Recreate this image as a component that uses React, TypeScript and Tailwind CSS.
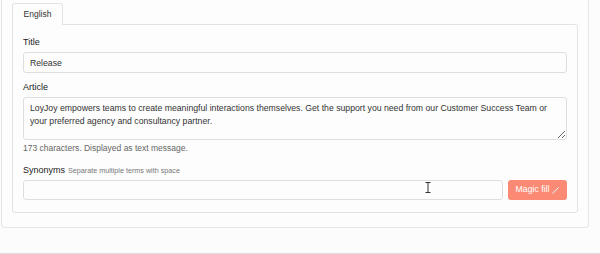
export default function App() {
  return (
    <div
      className="w-[600px] h-[254px] bg-[#fcfcfc] flex flex-col overflow-hidden text-[#333]"
      style={{ fontFamily: "'Liberation Sans', Arial, sans-serif" }}
    >
      <div className="ml-px w-[588px] h-[228px] border border-t-0 border-[#e6e6e6] rounded-b-[4px] bg-[#fdfdfd] pt-[3px] pl-[10px] flex flex-col">
        {/* tab */}
        <div className="w-[51px] h-[22px] -mb-px relative z-10 border border-b-0 border-[#e2e2e2] rounded-t-[3px] bg-[#fdfdfd] flex items-center justify-center text-[8.5px] text-[#333]">
          English
        </div>

        {/* panel */}
        <div className="w-[566px] h-[189px] border border-[#e2e2e2] rounded-b-[3px] rounded-tr-[3px] pt-[10px] px-[10px] flex flex-col">
          <label className="text-[9px] leading-[14px] text-[#222] mb-[3px]">Title</label>
          <input
            defaultValue="Release"
            className="w-[544px] h-[21px] border border-[#dedede] rounded-[3px] bg-[#fdfdfd] px-[6px] text-[8.7px] text-[#333] outline-none"
          />

          <label className="mt-[7px] text-[9px] leading-[14px] text-[#222] mb-[3px]">Article</label>
          <textarea
            defaultValue="LoyJoy empowers teams to create meaningful interactions themselves. Get the support you need from our Customer Success Team or your preferred agency and consultancy partner."
            className="w-[544px] h-[43px] border border-[#dedede] rounded-[3px] bg-[#fdfdfd] px-[6px] pt-[4px] text-[8.7px] leading-[13px] text-[#333] outline-none resize-y"
          />
          <div className="mt-[1px] text-[8.5px] leading-[14px] text-[#666]">
            173 characters. Displayed as text message.
          </div>

          <div className="mt-[8px] mb-[3px] h-[14px] flex items-baseline gap-[3px] leading-[14px]">
            <span className="text-[9px] leading-[14px] text-[#222]">Synonyms</span>
            <span className="text-[7.2px] leading-[14px] text-[#777]">Separate multiple terms with space</span>
          </div>
          <div className="flex gap-[5px] relative">
            <input className="w-[480px] h-[20px] border border-[#dedede] rounded-[3px] bg-[#fdfdfd] outline-none" />
            <button className="w-[59px] h-[20px] rounded-[3px] bg-[#fb8a74] text-white text-[8.7px] flex items-center justify-center gap-[3px]">
              Magic fill
              <svg width="7" height="7" viewBox="0 0 7 7">
                <path d="M0.8 6.2L5.2 1.8" stroke="#e4d6d2" strokeWidth="1.2" strokeLinecap="round" />
                <path d="M5.4 1.6L6.3 0.7" stroke="#ffffff" strokeWidth="1" strokeLinecap="round" />
              </svg>
            </button>
            {/* text cursor */}
            <svg className="absolute left-[402px] top-[2px]" width="6" height="11" viewBox="0 0 6 11">
              <path d="M0.5 0.5h5M3 0.5v10M0.5 10.5h5" stroke="#333" strokeWidth="1" fill="none" />
            </svg>
          </div>
        </div>
      </div>
      <div className="mt-auto h-px bg-[#dedede]" />
    </div>
  );
}
